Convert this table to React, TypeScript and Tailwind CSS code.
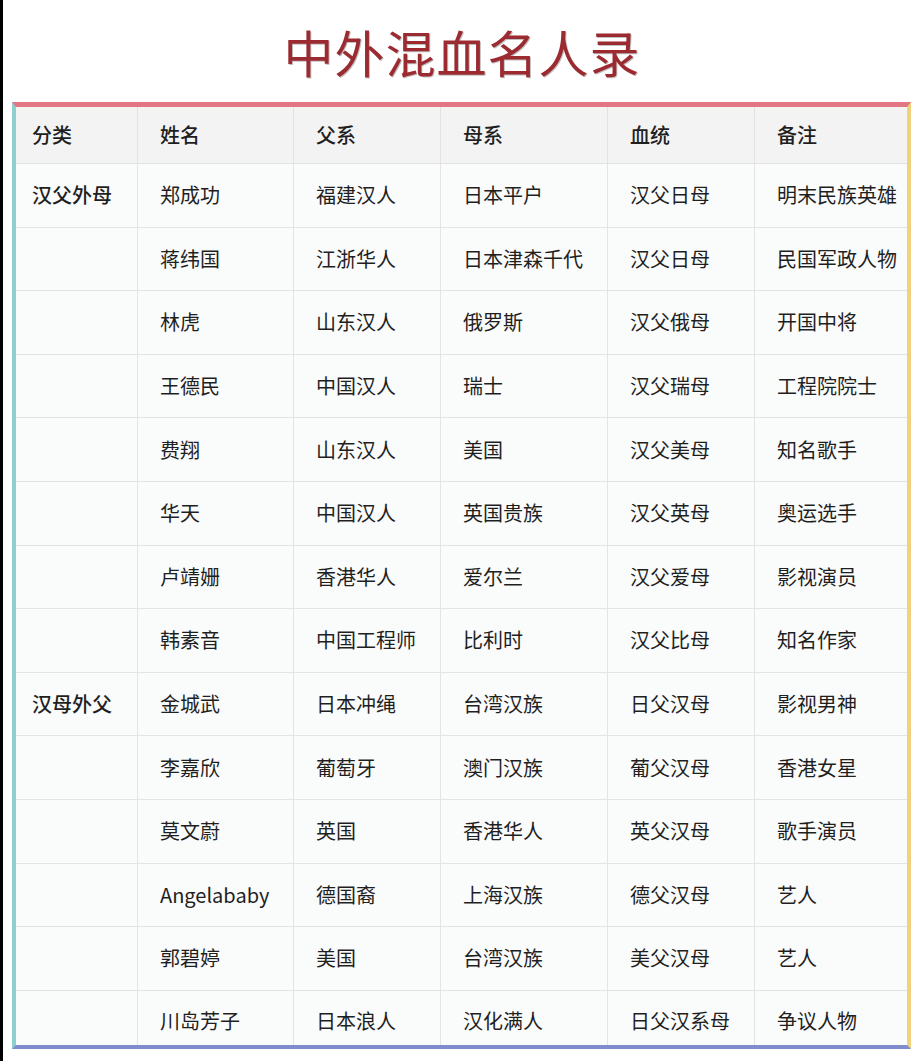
const rows: string[][] = [
  ["汉父外母", "郑成功", "福建汉人", "日本平户", "汉父日母", "明末民族英雄"],
  ["", "蒋纬国", "江浙华人", "日本津森千代", "汉父日母", "民国军政人物"],
  ["", "林虎", "山东汉人", "俄罗斯", "汉父俄母", "开国中将"],
  ["", "王德民", "中国汉人", "瑞士", "汉父瑞母", "工程院院士"],
  ["", "费翔", "山东汉人", "美国", "汉父美母", "知名歌手"],
  ["", "华天", "中国汉人", "英国贵族", "汉父英母", "奥运选手"],
  ["", "卢靖姗", "香港华人", "爱尔兰", "汉父爱母", "影视演员"],
  ["", "韩素音", "中国工程师", "比利时", "汉父比母", "知名作家"],
  ["汉母外父", "金城武", "日本冲绳", "台湾汉族", "日父汉母", "影视男神"],
  ["", "李嘉欣", "葡萄牙", "澳门汉族", "葡父汉母", "香港女星"],
  ["", "莫文蔚", "英国", "香港华人", "英父汉母", "歌手演员"],
  ["", "Angelababy", "德国裔", "上海汉族", "德父汉母", "艺人"],
  ["", "郭碧婷", "美国", "台湾汉族", "美父汉母", "艺人"],
  ["", "川岛芳子", "日本浪人", "汉化满人", "日父汉系母", "争议人物"],
];

const headers = ["分类", "姓名", "父系", "母系", "血统", "备注"];

const cols = "grid grid-cols-[121px_156px_147px_167px_147px_152px]";
const font = { fontFamily: '"Noto Sans CJK SC", "Noto Sans", sans-serif' };

const App = () => {
  return (
    <div className="min-h-[1061px] w-[917px] bg-white border-l-[3px] border-black" style={font}>
      {/* 标题 */}
      <div className="h-[102px] flex items-center justify-center">
        <h1 className="text-[50px] leading-none tracking-[1px] text-[#9c2a31] [text-shadow:1px_1px_0.5px_rgba(0,0,0,0.25)] pl-[4px]">
          中外混血名人录
        </h1>
      </div>

      {/* 表格 */}
      <div className="ml-[9px] w-[899px] border-t-[5px] border-t-[#e27683] border-l-[4px] border-l-[#8fcfd0] border-r-[4px] border-r-[#efd27b] border-b-[4px] border-b-[#7f8dcf] bg-[#fafbfb] text-[#1f1f1f] text-[20px]">
        <div className={`${cols} h-[57px] bg-[#f3f3f3] border-b border-[#e2e2e2]`}>
          {headers.map((h, i) => (
            <div
              key={h}
              className={`flex items-center font-medium ${i === 0 ? "pl-[16px]" : "pl-[22px] border-l border-[#e2e2e2]"}`}
            >
              {h}
            </div>
          ))}
        </div>
        {rows.map((r, ri) => {
          const last = ri === rows.length - 1;
          return (
            <div
              key={ri}
              className={`${cols} ${last ? "h-[54px]" : "h-[63.6px] border-b border-[#e4e4e4]"}`}
            >
              {r.map((c, ci) => (
                <div
                  key={ci}
                  className={`flex items-center ${ci === 0 ? "pl-[16px] font-medium" : "pl-[22px] border-l border-[#e4e4e4]"} ${last ? "pt-[6px]" : ""}`}
                >
                  {c}
                </div>
              ))}
            </div>
          );
        })}
      </div>
    </div>
  );
};

export default App;
